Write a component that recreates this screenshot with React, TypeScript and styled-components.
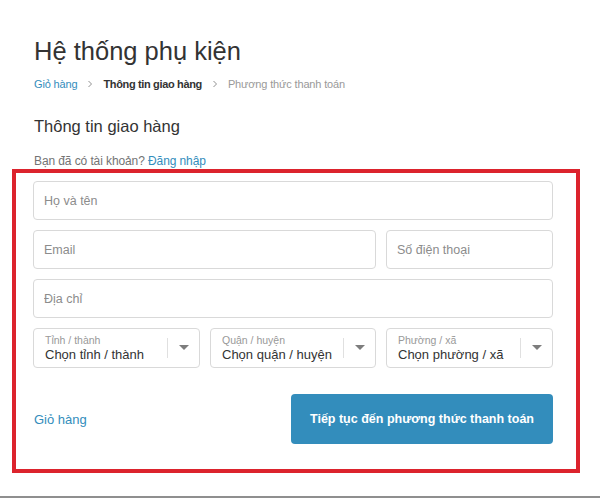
import React from "react";
import styled, { createGlobalStyle } from "styled-components";

const GlobalStyle = createGlobalStyle`
  html, body {
    margin: 0;
    padding: 0;
    background: #fff;
  }
  body {
    font-family: "Liberation Sans", Arial, sans-serif;
    color: #333;
  }
  * {
    box-sizing: border-box;
  }
`;

const Page = styled.div`
  height: 498px;
  padding: 36px 0 0 12px;
  border-bottom: 2px solid #8f8f8f;
  overflow: hidden;
`;

const Header = styled.div`
  padding-left: 22px;
  display: flex;
  flex-direction: column;
`;

const Title = styled.h1`
  margin: 0;
  font-size: 25.5px;
  line-height: 30px;
  font-weight: normal;
  color: #333;
`;

const Breadcrumb = styled.nav`
  margin-top: 10px;
  display: flex;
  align-items: center;
  gap: 7px;
  font-size: 11px;
  line-height: 16px;
`;

const Crumb = styled.span<{ $state: "link" | "current" | "next" }>`
  color: ${(p) =>
    p.$state === "link" ? "#338dbc" : p.$state === "current" ? "#333" : "#999"};
  font-weight: ${(p) => (p.$state === "current" ? "bold" : "normal")};
  letter-spacing: ${(p) => (p.$state === "current" ? "-0.35px" : "-0.15px")};
`;

const Chevron = styled.svg`
  width: 8px;
  height: 8px;
  margin: 0 2px;
`;

const SectionTitle = styled.h2`
  margin: 23px 0 0;
  font-size: 16.5px;
  line-height: 22px;
  font-weight: normal;
  color: #333;
`;

const LoginHint = styled.p`
  margin: 15px 0 0;
  font-size: 12px;
  line-height: 18px;
  letter-spacing: -0.1px;
  color: #737373;
  a {
    color: #338dbc;
    text-decoration: none;
  }
`;

const Highlight = styled.div`
  margin-top: -1px;
  width: 568px;
  border: 4px solid #dc232d;
  padding: 8px 23px 25px 17px;
`;

const Form = styled.form`
  display: flex;
  flex-direction: column;
  gap: 10px;
`;

const Row = styled.div<{ $cols: string }>`
  display: grid;
  grid-template-columns: ${(p) => p.$cols};
  gap: 10px;
`;

const Input = styled.input`
  height: 39px;
  width: 100%;
  border: 1px solid #d9d9d9;
  border-radius: 4px;
  padding: 0 10px;
  font-family: "Liberation Sans", Arial, sans-serif;
  font-size: 12.5px;
  color: #333;
  outline: none;
  &::placeholder {
    color: #8c8c8c;
  }
`;

const SelectBox = styled.div`
  height: 40px;
  border: 1px solid #d9d9d9;
  border-radius: 4px;
  display: flex;
  align-items: center;
  padding: 0 0 0 11px;
`;

const SelectText = styled.div`
  flex: 1;
  display: flex;
  flex-direction: column;
  min-width: 0;
`;

const SelectLabel = styled.span`
  font-size: 10.5px;
  line-height: 12px;
  color: #999;
  margin-top: 2px;
`;

const SelectValue = styled.span`
  font-size: 13px;
  line-height: 18px;
  color: #333;
  white-space: nowrap;
`;

const SelectArrow = styled.div`
  width: 32px;
  height: 20px;
  border-left: 1px solid #e0e0e0;
  display: flex;
  align-items: center;
  justify-content: center;
`;

const Footer = styled.div`
  margin-top: 26px;
  display: flex;
  align-items: center;
  justify-content: space-between;
`;

const BackLink = styled.a`
  padding-left: 1px;
  font-size: 13px;
  color: #338dbc;
  text-decoration: none;
`;

const Continue = styled.button`
  width: 262px;
  height: 50px;
  border: none;
  border-radius: 4px;
  background: #338dbc;
  color: #fff;
  font-family: "Liberation Sans", Arial, sans-serif;
  font-size: 12.5px;
  font-weight: bold;
  cursor: pointer;
`;

const ChevronIcon = () => (
  <Chevron viewBox="0 0 8 8">
    <path d="M2.5 1 L5.5 4 L2.5 7" fill="none" stroke="#919191" strokeWidth="1" />
  </Chevron>
);

const Select = ({ label, value }: { label: string; value: string }) => (
  <SelectBox>
    <SelectText>
      <SelectLabel>{label}</SelectLabel>
      <SelectValue>{value}</SelectValue>
    </SelectText>
    <SelectArrow>
      <svg width="10" height="6" viewBox="0 0 10 6">
        <path d="M0 0 H10 L5 5 Z" fill="#7d7d7d" />
      </svg>
    </SelectArrow>
  </SelectBox>
);

export default function App() {
  return (
    <Page>
      <GlobalStyle />
      <Header>
        <Title>Hệ thống phụ kiện</Title>
        <Breadcrumb>
          <Crumb $state="link">Giỏ hàng</Crumb>
          <ChevronIcon />
          <Crumb $state="current">Thông tin giao hàng</Crumb>
          <ChevronIcon />
          <Crumb $state="next">Phương thức thanh toán</Crumb>
        </Breadcrumb>
        <SectionTitle>Thông tin giao hàng</SectionTitle>
        <LoginHint>
          Bạn đã có tài khoản? <a href="#">Đăng nhập</a>
        </LoginHint>
      </Header>
      <Highlight>
        <Form onSubmit={(e) => e.preventDefault()}>
          <Input placeholder="Họ và tên" />
          <Row $cols="343px 167px">
            <Input placeholder="Email" />
            <Input placeholder="Số điện thoại" />
          </Row>
          <Input placeholder="Địa chỉ" />
          <Row $cols="167px 166px 167px">
            <Select label="Tỉnh / thành" value="Chọn tỉnh / thành" />
            <Select label="Quận / huyện" value="Chọn quận / huyện" />
            <Select label="Phường / xã" value="Chọn phường / xã" />
          </Row>
        </Form>
        <Footer>
          <BackLink href="#">Giỏ hàng</BackLink>
          <Continue type="button">Tiếp tục đến phương thức thanh toán</Continue>
        </Footer>
      </Highlight>
    </Page>
  );
}
